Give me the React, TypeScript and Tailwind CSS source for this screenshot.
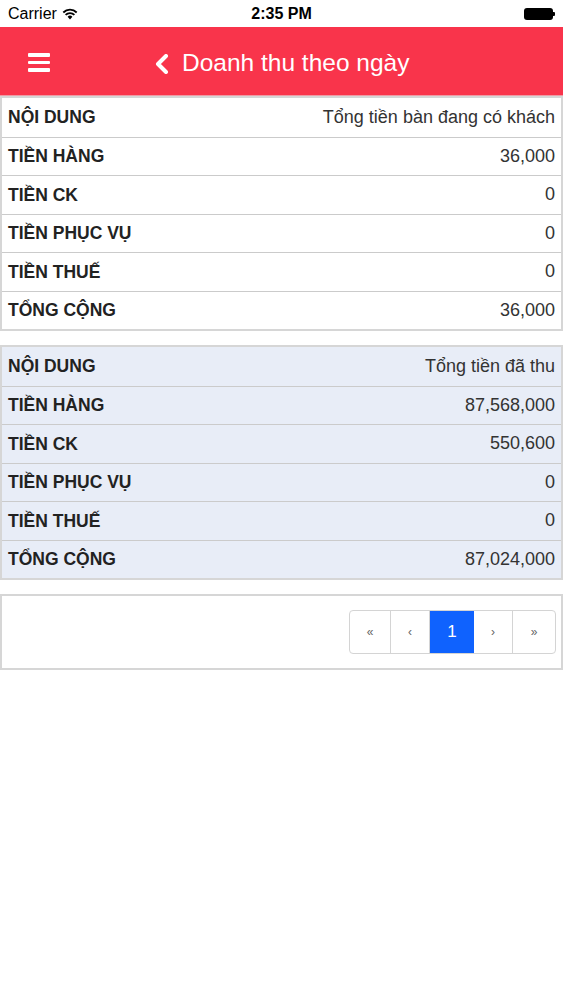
import React from "react";

const font = { fontFamily: '"Liberation Sans", Arial, sans-serif' };

type Row = [string, string];

function Table({ rows, bg }: { rows: Row[]; bg: string }) {
  return (
    <div className={`border-[2px] border-[#d6d6d6] ${bg}`}>
      {rows.map(([l, v], i) => (
        <div
          key={i}
          className={`flex items-center justify-between h-[38.5px] px-[6px] ${i > 0 ? "border-t-[1.5px] border-[#cbcbcb]" : ""}`}
        >
          <span className="text-[17.5px] font-bold text-[#222]">{l}</span>
          <span className="text-[18px] text-[#333]">{v}</span>
        </div>
      ))}
    </div>
  );
}

export default function App() {
  const t1: Row[] = [
    ["NỘI DUNG", "Tổng tiền bàn đang có khách"],
    ["TIỀN HÀNG", "36,000"],
    ["TIỀN CK", "0"],
    ["TIỀN PHỤC VỤ", "0"],
    ["TIỀN THUẾ", "0"],
    ["TỔNG CỘNG", "36,000"],
  ];
  const t2: Row[] = [
    ["NỘI DUNG", "Tổng tiền đã thu"],
    ["TIỀN HÀNG", "87,568,000"],
    ["TIỀN CK", "550,600"],
    ["TIỀN PHỤC VỤ", "0"],
    ["TIỀN THUẾ", "0"],
    ["TỔNG CỘNG", "87,024,000"],
  ];
  return (
    <div className="w-[563px] h-[1000px] bg-white" style={font}>
      {/* status bar */}
      <div className="h-[27px] flex items-center justify-between px-[8px] relative">
        <div className="flex items-center gap-[5px]">
          <span className="text-[16px] text-black">Carrier</span>
          <svg width="16" height="12" viewBox="0 0 16 12">
            <path d="M8 11.5 L5.6 8.8 A3.4 3.4 0 0 1 10.4 8.8 Z" fill="#000" />
            <path d="M3.6 6.9 A6.2 6.2 0 0 1 12.4 6.9" stroke="#000" strokeWidth="1.8" fill="none" />
            <path d="M1.3 4.5 A9.4 9.4 0 0 1 14.7 4.5" stroke="#000" strokeWidth="1.8" fill="none" />
          </svg>
        </div>
        <span className="absolute left-1/2 -translate-x-1/2 text-[16px] font-bold text-black">2:35 PM</span>
        <div className="flex items-center">
          <div className="w-[29px] h-[12px] bg-black rounded-[3px]" />
          <div className="w-[2px] h-[4px] bg-black rounded-r-[1px]" />
        </div>
      </div>
      {/* header */}
      <div className="h-[69px] bg-[#f9344b] relative flex items-center pt-[5px] border-b-[1px] border-[#ef9aa4]">
        <div className="absolute left-[28px] top-[26px] flex flex-col gap-[4px]">
          <div className="w-[22px] h-[3.5px] bg-white rounded-[1px]" />
          <div className="w-[22px] h-[3.5px] bg-white rounded-[1px]" />
          <div className="w-[22px] h-[3.5px] bg-white rounded-[1px]" />
        </div>
        <div className="flex items-center ml-[154px]">
          <svg width="16" height="20" viewBox="0 0 16 20">
            <path d="M12 2 L4 10 L12 18" stroke="#fff" strokeWidth="4" fill="none" strokeLinecap="round" strokeLinejoin="round" />
          </svg>
          <span className="ml-[12px] text-[24.5px] text-white">Doanh thu theo ngày</span>
        </div>
      </div>
      <div className="flex flex-col">
        <Table rows={t1} bg="bg-white" />
        <div className="h-[14px]" />
        <Table rows={t2} bg="bg-[#e8edf7]" />
        <div className="h-[14px]" />
        <div className="border-[2px] border-[#d6d6d6] h-[76px] flex items-center justify-end pr-[5px]">
          <div className="flex h-[44px] border border-[#d4d4d4] rounded-[4px] overflow-hidden">
            <div className="w-[41px] flex items-center justify-center text-[12px] text-[#666] border-r border-[#d4d4d4]">«</div>
            <div className="w-[39px] flex items-center justify-center text-[12px] text-[#666] border-r border-[#d4d4d4]">‹</div>
            <div className="w-[44px] flex items-center justify-center text-[17px] text-white bg-[#0f62fe]">1</div>
            <div className="w-[39px] flex items-center justify-center text-[12px] text-[#666] border-r border-[#d4d4d4]">›</div>
            <div className="w-[42px] flex items-center justify-center text-[12px] text-[#666]">»</div>
          </div>
        </div>
      </div>
    </div>
  );
}
